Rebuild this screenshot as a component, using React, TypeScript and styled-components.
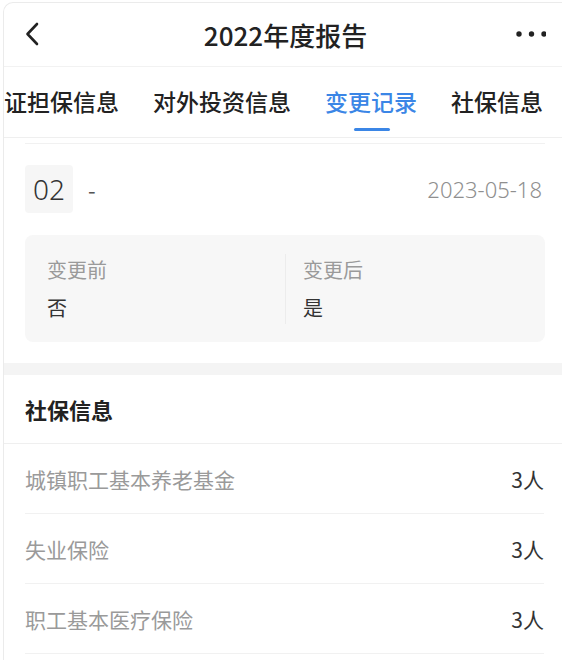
import React from 'react'
import styled, { createGlobalStyle } from 'styled-components'

const GlobalStyle = createGlobalStyle`
    html, body {
        margin: 0;
        padding: 0;
        background: #fff;
        overflow: hidden;
    }
    body {
        font-family: 'Noto Sans CJK SC', 'Noto Sans', sans-serif;
        color: #222;
    }
`

const tabs = ['证担保信息', '对外投资信息', '变更记录', '社保信息']
const socialRows = [
    { name: '城镇职工基本养老基金', count: '3人' },
    { name: '失业保险', count: '3人' },
    { name: '职工基本医疗保险', count: '3人' }
]

const App = function (): JSX.Element {
    return (
        <>
            <GlobalStyle />
            <Frame>
                <Header>
                    <BackButton type="button" aria-label="返回">
                        <svg width="14" height="24" viewBox="0 0 14 24" fill="none">
                            <path d="M12 2 L2.5 12 L12 22" stroke="#222" strokeWidth="2.6" strokeLinecap="round" strokeLinejoin="round" />
                        </svg>
                    </BackButton>
                    <Title>2022年度报告</Title>
                    <MoreButton type="button" aria-label="更多">
                        <svg width="30" height="8" viewBox="0 0 30 8">
                            <circle cx="3" cy="4" r="2.7" fill="#222" />
                            <circle cx="15.5" cy="4" r="2.7" fill="#222" />
                            <circle cx="28" cy="4" r="2.7" fill="#222" />
                        </svg>
                    </MoreButton>
                </Header>

                <TabStrip>
                    {tabs.map(tab => (
                        <Tab key={tab} $active={tab === '变更记录'}>
                            {tab}
                        </Tab>
                    ))}
                </TabStrip>

                <ChangeList>
                    <PrevItemEdge />
                    <ChangeItem>
                        <ItemHead>
                            <IndexBadge>02</IndexBadge>
                            <ItemField>-</ItemField>
                            <ItemDate>2023-05-18</ItemDate>
                        </ItemHead>
                        <CompareBox>
                            <CompareCol>
                                <CompareLabel>变更前</CompareLabel>
                                <CompareValue>否</CompareValue>
                            </CompareCol>
                            <CompareCol $divided>
                                <CompareLabel>变更后</CompareLabel>
                                <CompareValue>是</CompareValue>
                            </CompareCol>
                        </CompareBox>
                    </ChangeItem>
                </ChangeList>

                <SectionGap />

                <SectionTitle>社保信息</SectionTitle>
                <RowList>
                    {socialRows.map(row => (
                        <InfoRow key={row.name}>
                            <RowName>{row.name}</RowName>
                            <RowCount>{row.count}</RowCount>
                        </InfoRow>
                    ))}
                </RowList>
            </Frame>
        </>
    )
}

export default App

const Frame = styled.div`
    margin: 2px 0 0 3px;
    height: 658px;
    border-left: 1px solid #ebebeb;
    border-top: 1px solid #ebebeb;
    border-top-left-radius: 10px;
    background: #fff;
    overflow: hidden;
`

const Header = styled.header`
    display: grid;
    grid-template-columns: 1fr auto 1fr;
    align-items: center;
    height: 63px;
    padding: 0 16px 0 21px;
    border-bottom: 1px solid #f2f2f2;
`

const BackButton = styled.button`
    justify-self: start;
    display: flex;
    padding: 0;
    margin-top: -2px;
    border: none;
    background: none;
`

const Title = styled.h1`
    margin: 0;
    font-size: 26px;
    font-weight: 500;
    color: #222;
    line-height: 1;
`

const MoreButton = styled.button`
    justify-self: end;
    display: flex;
    padding: 0;
    margin-top: -2px;
    border: none;
    background: none;
`

const TabStrip = styled.nav`
    display: flex;
    height: 70px;
    overflow: hidden;
    border-bottom: 1px solid #efefef;
`

const Tab = styled.div<{ $active?: boolean }>`
    position: relative;
    flex: none;
    display: flex;
    align-items: center;
    padding: 0 17px 2px;
    font-size: 23px;
    font-weight: 500;
    color: ${p => (p.$active ? '#3b86e6' : '#222')};
    white-space: nowrap;

    &:first-child {
        padding-left: 0;
    }

    &::after {
        content: '';
        display: ${p => (p.$active ? 'block' : 'none')};
        position: absolute;
        left: 50%;
        bottom: 6px;
        width: 36px;
        height: 3px;
        margin-left: -17px;
        border-radius: 2px;
        background: #3b86e6;
    }
`

const ChangeList = styled.div`
    padding: 0 17px 21px 21px;
`

const PrevItemEdge = styled.div`
    height: 5px;
    border-bottom: 1px solid #f1f1f1;
`

const ChangeItem = styled.div`
    padding-top: 21px;
`

const ItemHead = styled.div`
    display: flex;
    align-items: center;
    height: 48px;
`

const IndexBadge = styled.span`
    display: flex;
    align-items: center;
    justify-content: center;
    width: 48px;
    height: 48px;
    border-radius: 4px;
    background: #f6f6f6;
    font-family: 'Noto Sans', 'Noto Sans CJK SC', sans-serif;
    font-size: 28px;
    font-weight: 300;
    color: #333;
`

const ItemField = styled.span`
    margin-left: 15px;
    font-size: 22px;
    color: #555;
`

const ItemDate = styled.span`
    margin-left: auto;
    margin-right: 3px;
    font-family: 'Noto Sans', 'Noto Sans CJK SC', sans-serif;
    font-size: 22px;
    font-weight: 300;
    color: #8f8f8f;
`

const CompareBox = styled.div`
    display: grid;
    grid-template-columns: 1fr 1fr;
    margin-top: 22px;
    height: 107px;
    padding: 0 22px;
    box-sizing: border-box;
    border-radius: 8px;
    background: #f7f7f7;
    align-items: center;
`

const CompareCol = styled.div<{ $divided?: boolean }>`
    display: flex;
    flex-direction: column;
    gap: 6px;
    padding-left: ${p => (p.$divided ? '17px' : '0')};
    border-left: ${p => (p.$divided ? '1px solid #ececec' : 'none')};
`

const CompareLabel = styled.span`
    font-size: 20px;
    line-height: 32px;
    color: #9a9a9a;
`

const CompareValue = styled.span`
    font-size: 20px;
    line-height: 32px;
    color: #333;
`

const SectionGap = styled.div`
    height: 12px;
    background: #f4f4f4;
`

const SectionTitle = styled.h2`
    display: flex;
    align-items: center;
    height: 68px;
    margin: 0;
    padding: 0 21px;
    font-size: 22px;
    font-weight: 700;
    color: #222;
    border-bottom: 1px solid #efefef;
`

const RowList = styled.div`
    padding: 0 18px 0 21px;
`

const InfoRow = styled.div`
    display: flex;
    align-items: center;
    justify-content: space-between;
    height: 69px;
    border-bottom: 1px solid #f1f1f1;
`

const RowName = styled.span`
    font-size: 21px;
    color: #9a9a9a;
`

const RowCount = styled.span`
    font-size: 21px;
    color: #333;
`
